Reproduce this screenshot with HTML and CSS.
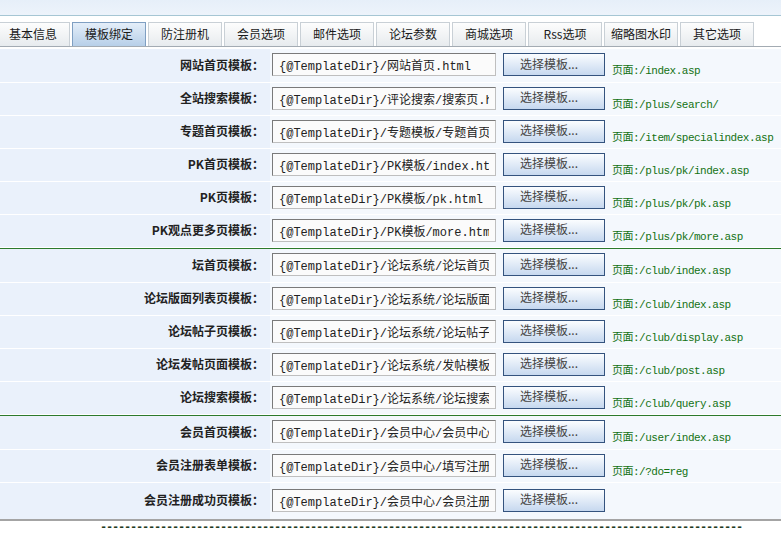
FILE: index.html
```html
<!DOCTYPE html>
<html lang="zh-CN">
<head>
<meta charset="utf-8">
<title>模板绑定</title>
<link rel="stylesheet" href="styles.css">
</head>
<body>
<div class="topband"></div>
<div class="tabbar">
  <div class="tab">基本信息</div>
  <div class="tab active">模板绑定</div>
  <div class="tab">防注册机</div>
  <div class="tab">会员选项</div>
  <div class="tab">邮件选项</div>
  <div class="tab">论坛参数</div>
  <div class="tab">商城选项</div>
  <div class="tab">Rss选项</div>
  <div class="tab">缩略图水印</div>
  <div class="tab">其它选项</div>
</div>
<div class="form">
  <div class="group">
    <div class="row"><div class="lbl">网站首页模板：</div><div class="val"><input class="fld" type="text" value="{@TemplateDir}/网站首页.html"><button class="btn">选择模板...</button><span class="page">页面:/index.asp</span></div></div>
    <div class="row"><div class="lbl">全站搜索模板：</div><div class="val"><input class="fld" type="text" value="{@TemplateDir}/评论搜索/搜索页.html"><button class="btn">选择模板...</button><span class="page">页面:/plus/search/</span></div></div>
    <div class="row"><div class="lbl">专题首页模板：</div><div class="val"><input class="fld" type="text" value="{@TemplateDir}/专题模板/专题首页.html"><button class="btn">选择模板...</button><span class="page">页面:/item/specialindex.asp</span></div></div>
    <div class="row"><div class="lbl">PK首页模板：</div><div class="val"><input class="fld" type="text" value="{@TemplateDir}/PK模板/index.html"><button class="btn">选择模板...</button><span class="page">页面:/plus/pk/index.asp</span></div></div>
    <div class="row"><div class="lbl">PK页模板：</div><div class="val"><input class="fld" type="text" value="{@TemplateDir}/PK模板/pk.html"><button class="btn">选择模板...</button><span class="page">页面:/plus/pk/pk.asp</span></div></div>
    <div class="row"><div class="lbl">PK观点更多页模板：</div><div class="val"><input class="fld" type="text" value="{@TemplateDir}/PK模板/more.html"><button class="btn">选择模板...</button><span class="page">页面:/plus/pk/more.asp</span></div></div>
  </div>
  <div class="group">
    <div class="row"><div class="lbl">坛首页模板：</div><div class="val"><input class="fld" type="text" value="{@TemplateDir}/论坛系统/论坛首页.html"><button class="btn">选择模板...</button><span class="page">页面:/club/index.asp</span></div></div>
    <div class="row"><div class="lbl">论坛版面列表页模板：</div><div class="val"><input class="fld" type="text" value="{@TemplateDir}/论坛系统/论坛版面列表.html"><button class="btn">选择模板...</button><span class="page">页面:/club/index.asp</span></div></div>
    <div class="row"><div class="lbl">论坛帖子页模板：</div><div class="val"><input class="fld" type="text" value="{@TemplateDir}/论坛系统/论坛帖子页.html"><button class="btn">选择模板...</button><span class="page">页面:/club/display.asp</span></div></div>
    <div class="row"><div class="lbl">论坛发帖页面模板：</div><div class="val"><input class="fld" type="text" value="{@TemplateDir}/论坛系统/发帖模板.html"><button class="btn">选择模板...</button><span class="page">页面:/club/post.asp</span></div></div>
    <div class="row"><div class="lbl">论坛搜索模板：</div><div class="val"><input class="fld" type="text" value="{@TemplateDir}/论坛系统/论坛搜索.html"><button class="btn">选择模板...</button><span class="page">页面:/club/query.asp</span></div></div>
  </div>
  <div class="group last">
    <div class="row"><div class="lbl">会员首页模板：</div><div class="val"><input class="fld" type="text" value="{@TemplateDir}/会员中心/会员中心首页.html"><button class="btn">选择模板...</button><span class="page">页面:/user/index.asp</span></div></div>
    <div class="row"><div class="lbl">会员注册表单模板：</div><div class="val"><input class="fld" type="text" value="{@TemplateDir}/会员中心/填写注册表单.html"><button class="btn">选择模板...</button><span class="page">页面:/?do=reg</span></div></div>
    <div class="row"><div class="lbl">会员注册成功页模板：</div><div class="val"><input class="fld" type="text" value="{@TemplateDir}/会员中心/会员注册成功.html"><button class="btn">选择模板...</button></div></div>
  </div>
</div>
<div class="dashes">-----------------------------------------------------------------------------------------------------------</div>
</body>
</html>
```
FILE: styles.css
```css
* { box-sizing: border-box; }
html, body { margin: 0; padding: 0; background: #fff; }
body {
  font-family: "Noto Sans CJK SC", "Liberation Sans", sans-serif;
  font-size: 12px;
  color: #222;
  overflow: hidden;
}
.topband {
  height: 16px;
  background: linear-gradient(#e6eff9, #edf3fb);
  border-bottom: 1px solid #a6c6d4;
}
.tabbar {
  display: flex;
  gap: 2px;
  margin-top: 6px;
  margin-left: -4px;
  height: 25px;
  border-bottom: 1px solid #a3abb3;
}
.tab {
  width: 74px;
  height: 24px;
  flex: none;
  display: flex;
  align-items: center;
  justify-content: center;
  border: 1px solid #c9d0d6;
  border-bottom: none;
  background: linear-gradient(#fdfdfd, #e7ebee);
  color: #1a1a1a;
  font-size: 12px;
  line-height: 1;
  padding-bottom: 2px;
}
.tab.active {
  border-color: #7f9fc2;
  background: linear-gradient(#e4eef9, #b7cfe8);
}
.form { margin-top: 2px; }
.group { border-bottom: 1px solid #2c7a2c; }
.group.last { border-bottom: none; }
.row {
  display: flex;
  height: 33px;
  border-bottom: 1px solid #fff;
}
.group .row:first-child { height: 34px; }
.group.last .row:last-child { height: 36px; border-bottom: none; }
.lbl {
  width: 270px;
  flex: none;
  display: flex;
  align-items: center;
  justify-content: flex-end;
  padding-right: 6px;
  padding-bottom: 3px;
  background: #eaf1fb;
  font-weight: bold;
  color: #222;
}
.val {
  flex: 1;
  display: flex;
  align-items: center;
  background: #f4f8fd;
  padding-left: 2px;
  padding-bottom: 2px;
}
.fld {
  width: 224px;
  height: 23px;
  margin: 0;
  padding: 1px 6px 0;
  border: 1px solid #bfbfbf;
  border-top-color: #7a7a7a;
  border-left-color: #7a7a7a;
  background: #fbfbfb;
  font-family: "Liberation Mono", "Noto Sans CJK SC", monospace;
  font-size: 12px;
  color: #222;
  outline: none;
}
.btn {
  width: 102px;
  height: 23px;
  margin: 0 0 0 7px;
  padding: 0 10px 3px 0;
  border: 1px solid #34537e;
  background: linear-gradient(#fbfdff, #c6d8ef);
  font-family: "Noto Sans CJK SC", sans-serif;
  font-size: 12px;
  color: #444;
  text-align: center;
}
.page {
  margin-left: 7px;
  margin-top: 9px;
  font-family: "Liberation Mono", "Noto Sans CJK SC", monospace;
  font-size: 11px;
  letter-spacing: -0.5px;
  color: #137213;
  white-space: nowrap;
}
.dashes {
  border-top: 2px solid #a4a4a4;
  padding-left: 100px;
  font-family: "Liberation Mono", monospace;
  font-size: 12px;
  font-weight: bold;
  letter-spacing: -1.2px;
  line-height: 12px;
  color: #223a22;
  white-space: nowrap;
  padding-top: 1px;
  overflow: hidden;
}
```
